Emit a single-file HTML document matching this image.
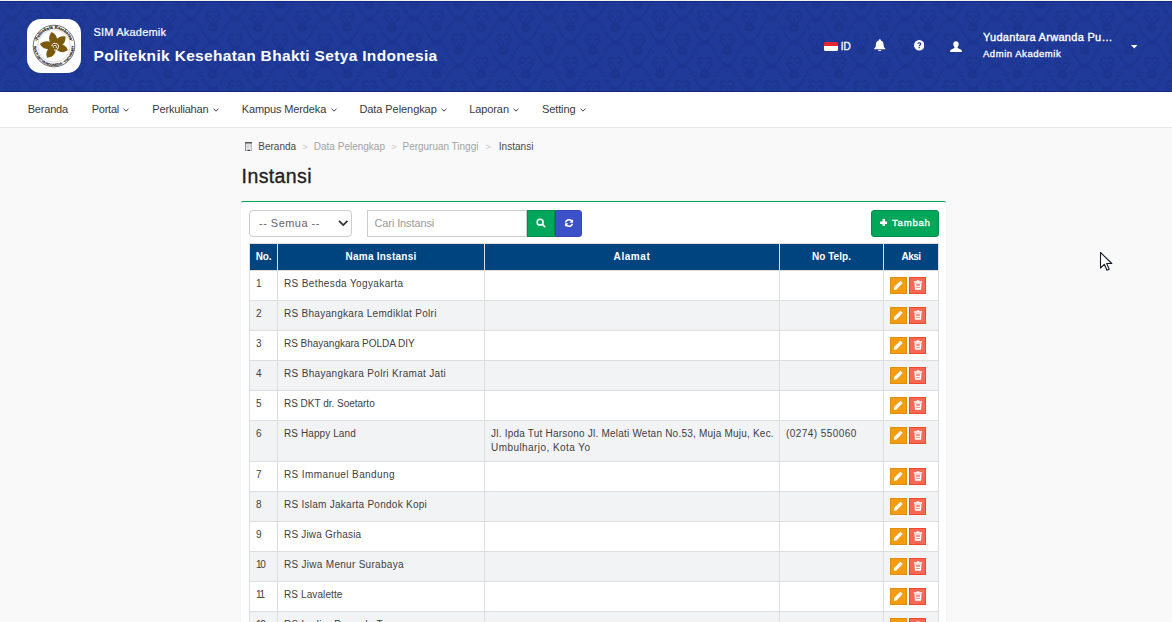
<!DOCTYPE html>
<html lang="id">
<head>
<meta charset="utf-8">
<title>Instansi - SIM Akademik</title>
<style>
*{box-sizing:border-box;margin:0;padding:0}
html,body{width:1172px;height:622px;overflow:hidden}
body{background:#f9f9f9;font-family:"Liberation Sans",sans-serif;font-size:10px;color:#3e3e3e;position:relative}
span{white-space:nowrap}
.topline{position:absolute;left:0;top:0;width:1172px;height:1px;background:#f4f2ee}
header{position:absolute;left:0;top:1px;width:1172px;height:91px;background:#1f3a99;border-top:1px solid #11298a;border-bottom:1px solid #15297f;overflow:hidden;color:#fff}
header svg.bg{position:absolute;left:0;top:0}
.logo{position:absolute;left:27px;top:17px;width:54px;height:54px;border-radius:14px;background:#fff}
.logo svg{position:absolute;left:0;top:0}
.app{position:absolute;left:93.5px;top:23px;font-size:11px;line-height:14px;-webkit-text-stroke:.2px #fff}
.inst{position:absolute;left:93.5px;top:44px;font-size:15.5px;line-height:20px;font-weight:bold}
.flag{position:absolute;left:824px;top:40px;width:14px;height:9px;border-radius:1.5px;background:linear-gradient(#e8252d 0,#e8252d 50%,#fff 50%,#fff 100%);overflow:hidden}
.lang{position:absolute;left:840.7px;top:37.500px;font-size:10px;line-height:14px;-webkit-text-stroke:.3px #fff}
header svg.hi{position:absolute}
.uname{position:absolute;left:983px;top:28px;font-size:11px;line-height:14px;-webkit-text-stroke:.35px #fff}
.urole{position:absolute;left:983px;top:44.500px;font-size:9.5px;line-height:13px;-webkit-text-stroke:.3px #fff}
nav{position:absolute;left:0;top:92px;width:1172px;height:36px;background:#fff;border-bottom:1px solid #e9e9e9}
nav ul{list-style:none}
nav li{position:absolute;top:10px;font-size:11px;line-height:14px;color:#3a3a3a;white-space:nowrap}
nav .chev{margin-left:4.4px;vertical-align:1.5px}
.crumb{position:absolute;left:241px;top:140px;height:14px;font-size:10px;line-height:14px;color:#a3a3a3;white-space:nowrap}
.crumb span,.crumb i,.crumb svg{position:absolute;top:0}
.crumb .d{color:#4a4a4a}
.crumb i{font-style:normal;color:#c9c9c9;font-size:9.500px}
h1{position:absolute;left:241.6px;top:163px;font-size:19.5px;line-height:26px;font-weight:normal;color:#222;-webkit-text-stroke:.35px #222}
.card{position:absolute;left:241px;top:201px;width:705px;height:440px;background:#fff;border-top:1px solid #00a65a;border-radius:2px 2px 0 0;box-shadow:0 0 1px rgba(0,0,0,.18)}
.sel{position:absolute;left:249px;top:210px;width:103px;height:27px;border:1px solid #ccc;border-radius:4px;background:#fff;font-size:11px;line-height:14px;color:#666;padding:5px 0 0 9px}
.sel svg{position:absolute;left:88.200px;top:9px}
.inp{position:absolute;left:367px;top:210px;width:160px;height:27px;border:1px solid #ccc;background:#fff;font-size:11px;line-height:14px;color:#999;padding:4.5px 0 0 6.5px}
.btn{position:absolute;top:210px;height:27px;color:#fff}
.btn svg{position:absolute}
.b-se{left:527px;width:28px;background:#00a65a;border:1px solid #008d4c}
.b-re{left:555px;width:27px;background:#3c50c8;border:1px solid #3646b4;border-radius:0 3px 3px 0}
.b-add{left:871px;width:68px;background:#00a65a;border:1px solid #008d4c;border-radius:3px;font-size:9.700px;line-height:14px;-webkit-text-stroke:.3px #fff}
.b-add span{position:absolute;left:20px;top:5px}
table{position:absolute;left:249px;top:243px;width:690px;border-collapse:separate;border-spacing:0;table-layout:fixed;font-size:10px;line-height:14px}
th,td{border-left:1px solid #ddd;border-top:1px solid #ddd;padding:6px 6px;vertical-align:top;text-align:left;overflow:hidden}
th:last-child,td:last-child{border-right:1px solid #ddd}
th{background:#00447f;color:#fff;font-weight:bold;text-align:center;height:27px}
tr.even td{background:#f2f3f5}
tr.odd td{background:#fff}
td.c-no b{font-weight:normal;letter-spacing:-1.300px}
td.c-ak{padding:6px 0 0 6px;white-space:nowrap;font-size:0;line-height:0}
td.c-ak a{display:inline-block;width:17px;height:17px;position:relative;vertical-align:top}
td.c-ak a svg{position:absolute}
a.b-ed svg{left:2.300px;top:2.300px}
a.b-de svg{left:2.700px;top:2.400px}
a.b-ed{background:#f39c12;border:1px solid #e08e0b}
a.b-de{background:#f56954;border:1px solid #f4452f;margin-left:2px}
.cursor{position:absolute;left:1099px;top:251px}
</style>
</head>
<body>
<div class="topline"></div>
<header>
<svg class="bg" width="1172" height="90" viewBox="0 0 1172 90">
<defs>
<g id="mo" fill="#1c3590" stroke="#1c3590" stroke-width="0" stroke-linecap="round">
<ellipse cx="0" cy="0" rx="5.300" ry="4.700"/>
<path d="M-2.600 -.8Q0 2.600 2.600 -.8Q0 1 -2.600 -.8z" fill="#1f3a99"/>
<circle cx="-8.800" cy="-1" r=".9"/><circle cx="8.800" cy="-1" r=".9"/>
<path d="M-2.500 -4.300L-6.800 -9.300M2.500 -4.300L6.800 -9.300" fill="none" stroke-width="1.800"/>
<circle cx="-7.300" cy="-9.900" r="1.400"/><circle cx="7.300" cy="-9.900" r="1.400"/>
<path d="M0 -4.500V-8.800" fill="none" stroke-width="1.500"/>
<path d="M-1.300 -15.200A2.700 2.700 0 1 0 -2.400 -11.300M1.300 -15.200A2.700 2.700 0 1 1 2.400 -11.300" fill="none" stroke-width="1.900"/>
<path d="M0 15.200C-5.500 11.500-10 7-11 2.500S-15.500 -6.500-22.350 -8.100M0 15.200C5.500 11.500 10 7 11 2.500S15.500 -6.500 22.350 -8.100" fill="none" stroke-width="2.600" stroke-linecap="butt" stroke-dasharray="2.800 1.300"/>
<path d="M-6.500 6.500l-3.500 -.5 1.500 3zM6.500 6.500l3.500 -.5-1.500 3zM-14 -1l-3 1.500 2.800 1.500zM14 -1l3 1.500-2.800 1.500z"/>
<path d="M-2.300 15.200m-2.200 0a2.200 2.200 0 1 0 4.400 0a2.200 2.200 0 1 0-4.400 0zM2.300 15.200m-2.200 0a2.200 2.200 0 1 0 4.400 0a2.200 2.200 0 1 0-4.400 0z" fill="none" stroke-width="1.100"/>
</g>
<pattern id="dmk" width="44.700" height="46.600" patternUnits="userSpaceOnUse" x="34.200" y="25.400">
<use href="#mo" x="0" y="0"/><use href="#mo" x="44.700" y="0"/><use href="#mo" x="0" y="46.600"/><use href="#mo" x="44.700" y="46.600"/>
<use href="#mo" x="22.350" y="23.300"/><use href="#mo" x="22.350" y="-23.300"/><use href="#mo" x="22.350" y="69.900"/><use href="#mo" x="0" y="-46.600"/><use href="#mo" x="44.700" y="-46.600"/><use href="#mo" x="-22.350" y="23.300"/><use href="#mo" x="67.050" y="23.300"/><use href="#mo" x="-22.350" y="69.900"/><use href="#mo" x="67.050" y="69.900"/>
</pattern>
</defs>
<rect width="1172" height="90" fill="url(#dmk)"/>
</svg>
<div class="logo">
<svg width="54" height="54" viewBox="0 0 54 54">
<defs><path id="arcT" d="M9.700 27a17.300 17.300 0 0 1 34.600 0"/><path id="arcB" d="M7 27a20 20 0 0 0 40 0"/></defs>
<circle cx="27" cy="27" r="20.800" fill="#fff" stroke="#3a3a3a" stroke-width=".7"/>
<circle cx="27" cy="27" r="16.300" fill="none" stroke="#999" stroke-width=".35"/>
<text font-family="Liberation Serif,serif" font-size="4.300" font-weight="bold" fill="#222" stroke="#222" stroke-width=".2" letter-spacing=".15"><textPath href="#arcT" startOffset="50%" text-anchor="middle">Politeknik Kesehatan</textPath></text>
<text font-family="Liberation Sans,sans-serif" font-size="3.200" font-weight="bold" fill="#222" stroke="#222" stroke-width=".15"><textPath href="#arcB" startOffset="50%" text-anchor="middle">BHAKTI SETYA INDONESIA · YOGYAKARTA</textPath></text>
<circle cx="9" cy="21.500" r=".7" fill="#b8860b"/><circle cx="45" cy="21.500" r=".7" fill="#b8860b"/>
<g fill="#7b5a0f" transform="translate(27.900 27.400)"><path d="M0 1C5.0 -3.7 5.6 -10.7 0 -14.9C-5.6 -10.7 -5.0 -3.7 0 1z" transform="rotate(-13)"/><path d="M0 1C5.0 -3.6 5.6 -10.4 0 -14.4C-5.6 -10.4 -5.0 -3.6 0 1z" transform="rotate(47)"/><path d="M0 1C4.9 -3.4 5.4 -9.7 0 -13.5C-5.4 -9.7 -4.9 -3.4 0 1z" transform="rotate(106)"/><path d="M0 1C5.0 -3.5 5.6 -9.9 0 -13.8C-5.6 -9.9 -5.0 -3.5 0 1z" transform="rotate(215)"/><path d="M0 1C4.9 -3.8 5.4 -10.9 0 -15.2C-5.4 -10.9 -4.9 -3.8 0 1z" transform="rotate(279)"/><circle r="3.600"/></g>
<path d="M24.800 27.200a3.300 3.300 0 1 1 2.200 3.600" fill="none" stroke="#fff" stroke-width="1"/><path d="M26.500 28.800a1.600 1.600 0 1 1 2.600 .2" fill="none" stroke="#fff" stroke-width=".8"/>
</svg>
</div>
<div class="app"><span style="letter-spacing:0.199px">SIM Akademik</span></div>
<div class="inst"><span style="letter-spacing:0.328px">Politeknik Kesehatan Bhakti Setya Indonesia</span></div>
<div class="flag"></div>
<div class="lang"><span style="letter-spacing:0.100px">ID</span></div>
<svg class="hi" style="left:874px;top:36.700px" width="11.5" height="12.5" viewBox="0 0 16 17"><path fill="#fff" d="M8 0c.8 0 1.400.6 1.400 1.400v.4c2.300.6 3.900 2.700 3.900 5.200 0 3 .7 4.500 2.400 6v1H.3v-1c1.700-1.500 2.400-3 2.400-6 0-2.500 1.600-4.600 3.900-5.200v-.4C6.600.6 7.200 0 8 0zM5.800 15h4.400c0 1.200-1 2-2.200 2s-2.200-.8-2.200-2z"/></svg>
<svg class="hi" style="left:913.5px;top:38.300px" width="10.5" height="10.5" viewBox="0 0 16 16"><circle cx="8" cy="8" r="8" fill="#fff"/><path fill="#1f3a99" d="M5.200 6.200C5.300 4.500 6.500 3.500 8.100 3.500c1.700 0 2.900 1 2.900 2.500 0 1.100-.6 1.700-1.400 2.300-.6.400-.8.700-.8 1.400H7.100c0-1.100.3-1.700 1.100-2.300.6-.4.900-.7.900-1.300 0-.6-.4-1-1-1-.7 0-1.100.4-1.200 1.100zM7 10.600h1.900v1.900H7z"/></svg>
<svg class="hi" style="left:949.5px;top:38.700px" width="12" height="11.5" viewBox="0 0 16 15"><path fill="#fff" d="M8 0c2.200 0 3.600 1.600 3.600 3.800 0 1.500-.5 3-1.400 3.900-.3.300-.4.800-.1 1.200.3.500.9.700 2 1.100 2.300.8 3.500 1.500 3.700 3.300V15H.2v-1.700c.2-1.800 1.400-2.500 3.700-3.300 1.100-.4 1.700-.6 2-1.100.3-.4.200-.9-.1-1.200-.9-.9-1.400-2.400-1.400-3.900C4.400 1.600 5.800 0 8 0z"/></svg>
<div class="uname"><span style="letter-spacing:0.298px">Yudantara Arwanda Pu…</span></div>
<div class="urole"><span style="letter-spacing:0.533px">Admin Akademik</span></div>
<svg class="hi" style="left:1131px;top:43px" width="6.500" height="3.500" viewBox="0 0 13 7"><path fill="#fff" d="M0 0h13L6.500 7z"/></svg>
</header>
<nav><ul>
<li style="left:27.7px"><span style="letter-spacing:-0.199px">Beranda</span></li>
<li style="left:91.7px"><span style="letter-spacing:-0.230px">Portal</span><svg class="chev" viewBox="0 0 8 5" width="6" height="4"><path d="M0.7 0.8L4 4 7.3 0.8" fill="none" stroke="#333" stroke-width="1.250"/></svg></li>
<li style="left:152.3px"><span style="letter-spacing:-0.179px">Perkuliahan</span><svg class="chev" viewBox="0 0 8 5" width="6" height="4"><path d="M0.7 0.8L4 4 7.3 0.8" fill="none" stroke="#333" stroke-width="1.250"/></svg></li>
<li style="left:241.7px"><span style="letter-spacing:-0.125px">Kampus Merdeka</span><svg class="chev" viewBox="0 0 8 5" width="6" height="4"><path d="M0.7 0.8L4 4 7.3 0.8" fill="none" stroke="#333" stroke-width="1.250"/></svg></li>
<li style="left:359.4px"><span style="letter-spacing:-0.068px">Data Pelengkap</span><svg class="chev" viewBox="0 0 8 5" width="6" height="4"><path d="M0.7 0.8L4 4 7.3 0.8" fill="none" stroke="#333" stroke-width="1.250"/></svg></li>
<li style="left:469.3px"><span style="letter-spacing:-0.112px">Laporan</span><svg class="chev" viewBox="0 0 8 5" width="6" height="4"><path d="M0.7 0.8L4 4 7.3 0.8" fill="none" stroke="#333" stroke-width="1.250"/></svg></li>
<li style="left:541.9px"><span style="letter-spacing:-0.092px">Setting</span><svg class="chev" viewBox="0 0 8 5" width="6" height="4"><path d="M0.7 0.8L4 4 7.3 0.8" fill="none" stroke="#333" stroke-width="1.250"/></svg></li>
</ul></nav>
<div class="crumb">
<svg style="left:3.800px;top:1.800px" width="7.5" height="9.500" viewBox="0 0 15 19"><path fill="#eceaf4" d="M1 1h13v17H1z"/><path fill="none" stroke="#777" stroke-width="1.600" d="M1 1h13v17H1z"/><path fill="#555" d="M0 0h15v3H0z"/><path fill="#d9c9d0" d="M3.500 4.500h2v8h-2z"/><path fill="#c9d9c9" d="M6.500 4.500h2v8h-2z"/><path fill="#c9cfe6" d="M9.500 4.500h2v8h-2z"/><path fill="#444" d="M5 15.500h5V19H5z"/></svg>
<span class="d" style="left:17.300px"><span style="letter-spacing:-0.002px">Beranda</span></span>
<i style="left:61.300px">&gt;</i>
<span style="left:72.800px"><span style="letter-spacing:0.002px">Data Pelengkap</span></span>
<i style="left:150.300px">&gt;</i>
<span style="left:161.500px"><span style="letter-spacing:-0.018px">Perguruan Tinggi</span></span>
<i style="left:244.300px">&gt;</i>
<span class="d" style="left:257.800px"><span style="letter-spacing:0.019px">Instansi</span></span>
</div>
<h1><span style="letter-spacing:0.400px">Instansi</span></h1>
<div class="card"></div>
<div class="sel"><span style="letter-spacing:0.477px">-- Semua --</span><svg width="10.5" height="6.500" viewBox="0 0 11 7"><path d="M1 1l4.500 4.500L10 1" fill="none" stroke="#333" stroke-width="1.900"/></svg></div>
<div class="inp"><span style="letter-spacing:-0.112px">Cari Instansi</span></div>
<a class="btn b-se"><svg style="left:8px;top:6.500px" width="10" height="10" viewBox="0 0 16 16"><circle cx="6.600" cy="6.600" r="4.700" fill="none" stroke="#fff" stroke-width="2.500"/><path d="M10.300 10.300l3.600 3.600" stroke="#fff" stroke-width="2.700" stroke-linecap="round"/></svg></a>
<a class="btn b-re"><svg style="left:7.800px;top:6.500px" width="10" height="10" viewBox="0 0 16 16"><path fill="#fff" d="M8 1.500c2 0 3.700.8 4.900 2.200L14.500 2v5.500H9l2-2C10.300 4.600 9.200 4 8 4 6 4 4.400 5.300 3.900 7H1.300C1.900 3.900 4.700 1.500 8 1.500zM1.500 14V8.500H7l-2 2c.7.900 1.800 1.500 3 1.500 2 0 3.600-1.300 4.100-3h2.600c-.6 3.100-3.400 5.500-6.700 5.500-2 0-3.700-.8-4.900-2.200z"/></svg></a>
<a class="btn b-add"><svg style="left:7.800px;top:7.800px" width="7.5" height="7.500" viewBox="0 0 8 8"><path fill="#fff" d="M2.700 0h2.600v2.700H8v2.600H5.300V8H2.700V5.300H0V2.700h2.700z"/></svg><span style="letter-spacing:0.706px">Tambah</span></a>
<table>
<colgroup><col style="width:28px"><col style="width:207px"><col style="width:295px"><col style="width:104px"><col style="width:56px"></colgroup>
<thead><tr><th style="padding-left:0;padding-right:0"><span style="letter-spacing:-0.205px">No.</span></th><th><span style="letter-spacing:0.241px">Nama Instansi</span></th><th><span style="letter-spacing:0.568px">Alamat</span></th><th><span style="letter-spacing:0.057px">No Telp.</span></th><th><span style="letter-spacing:-0.508px">Aksi</span></th></tr></thead>
<tbody>
<tr class="odd" style="height:30px"><td class="c-no">1</td><td><span style="letter-spacing:0.371px">RS Bethesda Yogyakarta</span></td><td></td><td></td><td class="c-ak"><a class="b-ed"><svg class="ic" viewBox="0 0 16 16" width="10.5" height="10.5"><path fill="#fff" d="M11.300 1.200l3.500 3.500L5.200 14.300l-4 .5.500-4z"/><path fill="#f39c12" d="M9.600 3.600l.6-.6 2.800 2.800-.6.600z" opacity=".55"/></svg></a><a class="b-de"><svg class="ic" viewBox="0 0 16 16" width="10" height="10"><path fill="#fff" fill-rule="evenodd" d="M6 .5h4V2h4.500v2.200h-13V2H6zM2.400 5h11.200l-.7 10.500H3.100zM5 6.900v2.300h6V6.900zM5 11.600v1.300h6v-1.300z"/></svg></a></td></tr>
<tr class="even" style="height:30px"><td class="c-no">2</td><td><span style="letter-spacing:0.291px">RS Bhayangkara Lemdiklat Polri</span></td><td></td><td></td><td class="c-ak"><a class="b-ed"><svg class="ic" viewBox="0 0 16 16" width="10.5" height="10.5"><path fill="#fff" d="M11.300 1.200l3.500 3.500L5.200 14.300l-4 .5.500-4z"/><path fill="#f39c12" d="M9.600 3.600l.6-.6 2.800 2.800-.6.600z" opacity=".55"/></svg></a><a class="b-de"><svg class="ic" viewBox="0 0 16 16" width="10" height="10"><path fill="#fff" fill-rule="evenodd" d="M6 .5h4V2h4.500v2.200h-13V2H6zM2.400 5h11.200l-.7 10.500H3.100zM5 6.900v2.300h6V6.900zM5 11.600v1.300h6v-1.300z"/></svg></a></td></tr>
<tr class="odd" style="height:30px"><td class="c-no">3</td><td><span style="letter-spacing:-0.021px">RS Bhayangkara POLDA DIY</span></td><td></td><td></td><td class="c-ak"><a class="b-ed"><svg class="ic" viewBox="0 0 16 16" width="10.5" height="10.5"><path fill="#fff" d="M11.300 1.200l3.500 3.500L5.200 14.300l-4 .5.500-4z"/><path fill="#f39c12" d="M9.600 3.600l.6-.6 2.800 2.800-.6.600z" opacity=".55"/></svg></a><a class="b-de"><svg class="ic" viewBox="0 0 16 16" width="10" height="10"><path fill="#fff" fill-rule="evenodd" d="M6 .5h4V2h4.500v2.200h-13V2H6zM2.400 5h11.200l-.7 10.500H3.100zM5 6.900v2.300h6V6.900zM5 11.600v1.300h6v-1.300z"/></svg></a></td></tr>
<tr class="even" style="height:30px"><td class="c-no">4</td><td><span style="letter-spacing:0.325px">RS Bhayangkara Polri Kramat Jati</span></td><td></td><td></td><td class="c-ak"><a class="b-ed"><svg class="ic" viewBox="0 0 16 16" width="10.5" height="10.5"><path fill="#fff" d="M11.300 1.200l3.500 3.500L5.200 14.300l-4 .5.500-4z"/><path fill="#f39c12" d="M9.600 3.600l.6-.6 2.800 2.800-.6.600z" opacity=".55"/></svg></a><a class="b-de"><svg class="ic" viewBox="0 0 16 16" width="10" height="10"><path fill="#fff" fill-rule="evenodd" d="M6 .5h4V2h4.500v2.200h-13V2H6zM2.400 5h11.200l-.7 10.500H3.100zM5 6.900v2.300h6V6.900zM5 11.600v1.300h6v-1.300z"/></svg></a></td></tr>
<tr class="odd" style="height:30px"><td class="c-no">5</td><td><span style="letter-spacing:-0.015px">RS DKT dr. Soetarto</span></td><td></td><td></td><td class="c-ak"><a class="b-ed"><svg class="ic" viewBox="0 0 16 16" width="10.5" height="10.5"><path fill="#fff" d="M11.300 1.200l3.500 3.500L5.200 14.300l-4 .5.500-4z"/><path fill="#f39c12" d="M9.600 3.600l.6-.6 2.800 2.800-.6.600z" opacity=".55"/></svg></a><a class="b-de"><svg class="ic" viewBox="0 0 16 16" width="10" height="10"><path fill="#fff" fill-rule="evenodd" d="M6 .5h4V2h4.500v2.200h-13V2H6zM2.400 5h11.200l-.7 10.500H3.100zM5 6.900v2.300h6V6.900zM5 11.600v1.300h6v-1.300z"/></svg></a></td></tr>
<tr class="even" style="height:41px"><td class="c-no">6</td><td><span style="letter-spacing:0.091px">RS Happy Land</span></td><td><span style="letter-spacing:0.215px">Jl. Ipda Tut Harsono Jl. Melati Wetan No.53, Muja Muju, Kec.</span><br><span style="letter-spacing:0.435px">Umbulharjo, Kota Yo</span></td><td><span style="letter-spacing:0.436px">(0274) 550060</span></td><td class="c-ak"><a class="b-ed"><svg class="ic" viewBox="0 0 16 16" width="10.5" height="10.5"><path fill="#fff" d="M11.300 1.200l3.500 3.500L5.200 14.300l-4 .5.500-4z"/><path fill="#f39c12" d="M9.600 3.600l.6-.6 2.800 2.800-.6.600z" opacity=".55"/></svg></a><a class="b-de"><svg class="ic" viewBox="0 0 16 16" width="10" height="10"><path fill="#fff" fill-rule="evenodd" d="M6 .5h4V2h4.500v2.200h-13V2H6zM2.400 5h11.200l-.7 10.500H3.100zM5 6.900v2.300h6V6.900zM5 11.600v1.300h6v-1.300z"/></svg></a></td></tr>
<tr class="odd" style="height:30px"><td class="c-no">7</td><td><span style="letter-spacing:0.394px">RS Immanuel Bandung</span></td><td></td><td></td><td class="c-ak"><a class="b-ed"><svg class="ic" viewBox="0 0 16 16" width="10.5" height="10.5"><path fill="#fff" d="M11.300 1.200l3.500 3.500L5.200 14.300l-4 .5.500-4z"/><path fill="#f39c12" d="M9.600 3.600l.6-.6 2.800 2.800-.6.600z" opacity=".55"/></svg></a><a class="b-de"><svg class="ic" viewBox="0 0 16 16" width="10" height="10"><path fill="#fff" fill-rule="evenodd" d="M6 .5h4V2h4.500v2.200h-13V2H6zM2.400 5h11.200l-.7 10.500H3.100zM5 6.900v2.300h6V6.900zM5 11.600v1.300h6v-1.300z"/></svg></a></td></tr>
<tr class="even" style="height:30px"><td class="c-no">8</td><td><span style="letter-spacing:0.266px">RS Islam Jakarta Pondok Kopi</span></td><td></td><td></td><td class="c-ak"><a class="b-ed"><svg class="ic" viewBox="0 0 16 16" width="10.5" height="10.5"><path fill="#fff" d="M11.300 1.200l3.500 3.500L5.200 14.300l-4 .5.500-4z"/><path fill="#f39c12" d="M9.600 3.600l.6-.6 2.800 2.800-.6.600z" opacity=".55"/></svg></a><a class="b-de"><svg class="ic" viewBox="0 0 16 16" width="10" height="10"><path fill="#fff" fill-rule="evenodd" d="M6 .5h4V2h4.500v2.200h-13V2H6zM2.400 5h11.200l-.7 10.500H3.100zM5 6.900v2.300h6V6.900zM5 11.600v1.300h6v-1.300z"/></svg></a></td></tr>
<tr class="odd" style="height:30px"><td class="c-no">9</td><td><span style="letter-spacing:0.188px">RS Jiwa Grhasia</span></td><td></td><td></td><td class="c-ak"><a class="b-ed"><svg class="ic" viewBox="0 0 16 16" width="10.5" height="10.5"><path fill="#fff" d="M11.300 1.200l3.500 3.500L5.200 14.300l-4 .5.500-4z"/><path fill="#f39c12" d="M9.600 3.600l.6-.6 2.800 2.800-.6.600z" opacity=".55"/></svg></a><a class="b-de"><svg class="ic" viewBox="0 0 16 16" width="10" height="10"><path fill="#fff" fill-rule="evenodd" d="M6 .5h4V2h4.500v2.200h-13V2H6zM2.400 5h11.200l-.7 10.500H3.100zM5 6.900v2.300h6V6.900zM5 11.600v1.300h6v-1.300z"/></svg></a></td></tr>
<tr class="even" style="height:30px"><td class="c-no"><b>10</b></td><td><span style="letter-spacing:0.291px">RS Jiwa Menur Surabaya</span></td><td></td><td></td><td class="c-ak"><a class="b-ed"><svg class="ic" viewBox="0 0 16 16" width="10.5" height="10.5"><path fill="#fff" d="M11.300 1.200l3.500 3.500L5.200 14.300l-4 .5.500-4z"/><path fill="#f39c12" d="M9.600 3.600l.6-.6 2.800 2.800-.6.600z" opacity=".55"/></svg></a><a class="b-de"><svg class="ic" viewBox="0 0 16 16" width="10" height="10"><path fill="#fff" fill-rule="evenodd" d="M6 .5h4V2h4.500v2.200h-13V2H6zM2.400 5h11.200l-.7 10.500H3.100zM5 6.900v2.300h6V6.900zM5 11.600v1.300h6v-1.300z"/></svg></a></td></tr>
<tr class="odd" style="height:30px"><td class="c-no"><b>11</b></td><td><span style="letter-spacing:0.103px">RS Lavalette</span></td><td></td><td></td><td class="c-ak"><a class="b-ed"><svg class="ic" viewBox="0 0 16 16" width="10.5" height="10.5"><path fill="#fff" d="M11.300 1.200l3.500 3.500L5.200 14.300l-4 .5.500-4z"/><path fill="#f39c12" d="M9.600 3.600l.6-.6 2.800 2.800-.6.600z" opacity=".55"/></svg></a><a class="b-de"><svg class="ic" viewBox="0 0 16 16" width="10" height="10"><path fill="#fff" fill-rule="evenodd" d="M6 .5h4V2h4.500v2.200h-13V2H6zM2.400 5h11.200l-.7 10.500H3.100zM5 6.900v2.300h6V6.900zM5 11.600v1.300h6v-1.300z"/></svg></a></td></tr>
<tr class="even" style="height:30px"><td class="c-no"><b>12</b></td><td><span style="letter-spacing:0.307px">RS Ludira Persada Tama</span></td><td></td><td></td><td class="c-ak"><a class="b-ed"><svg class="ic" viewBox="0 0 16 16" width="10.5" height="10.5"><path fill="#fff" d="M11.300 1.200l3.500 3.500L5.200 14.300l-4 .5.500-4z"/><path fill="#f39c12" d="M9.600 3.600l.6-.6 2.800 2.800-.6.600z" opacity=".55"/></svg></a><a class="b-de"><svg class="ic" viewBox="0 0 16 16" width="10" height="10"><path fill="#fff" fill-rule="evenodd" d="M6 .5h4V2h4.500v2.200h-13V2H6zM2.400 5h11.200l-.7 10.500H3.100zM5 6.900v2.300h6V6.900zM5 11.600v1.300h6v-1.300z"/></svg></a></td></tr>
</tbody>
</table>
<svg class="cursor" width="14" height="21" viewBox="0 0 14 21"><path d="M1.500 1.500v15.500l3.800-3.700 2.600 6 2.300-1-2.600-5.800h5.200z" fill="#fff" stroke="#1a1a2e" stroke-width="1.100" stroke-linejoin="round"/></svg>
</body>
</html>
